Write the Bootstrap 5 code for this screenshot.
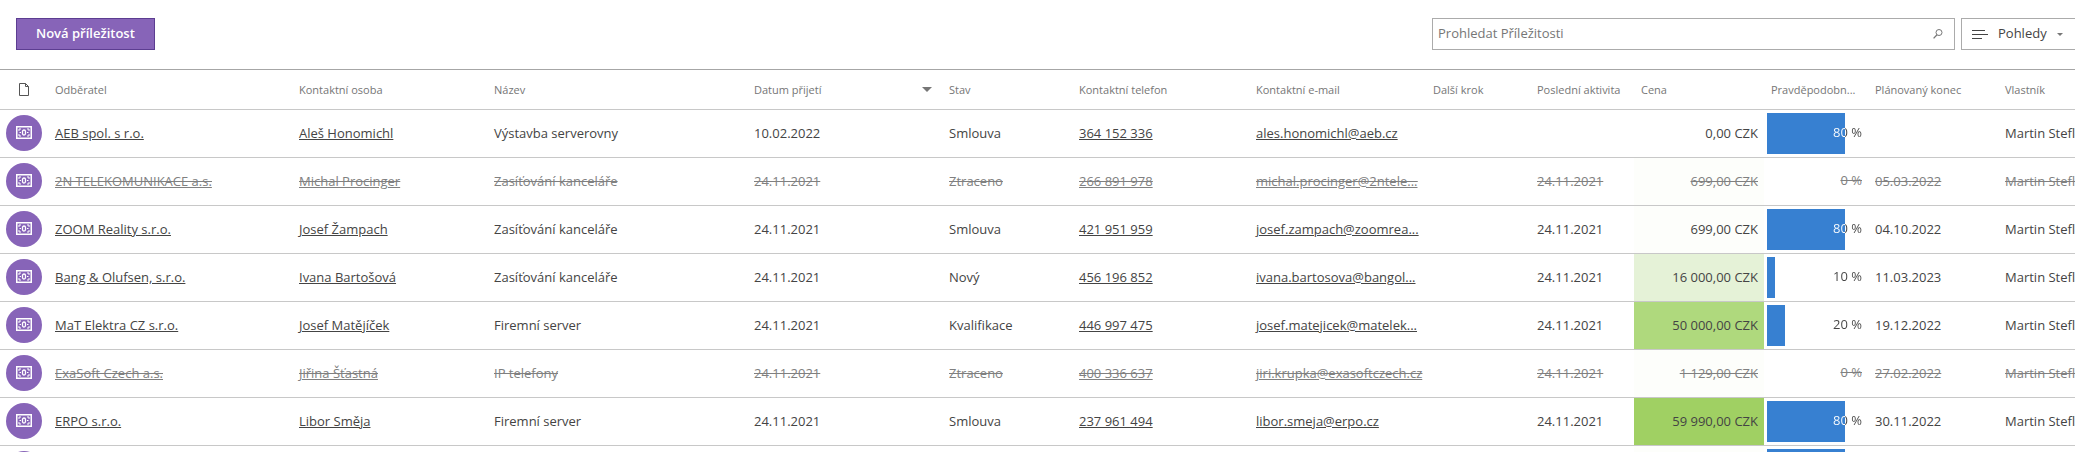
<!DOCTYPE html>
<html lang="cs">
<head>
<meta charset="utf-8">
<meta name="viewport" content="width=device-width, initial-scale=1">
<title>Příležitosti</title>
<link href="https://cdn.jsdelivr.net/npm/bootstrap@5.3.0/dist/css/bootstrap.min.css" rel="stylesheet">
<style>
  :root { --crm-purple: #8764b8; --crm-bar: #3780d1; --crm-text: #444; --crm-muted: #767676; --crm-line: #c8c8c8; --crm-frame: #ababab; }
  body { font-family: "Open Sans", "Noto Sans", sans-serif; font-size: 13px; line-height: 20px; color: var(--crm-text); }
  .toolbar { padding: 18px 0 19px 16px; gap: 6px; }
  .btn-new { --bs-btn-bg: var(--crm-purple); --bs-btn-color: #fff; --bs-btn-border-color: #5c3d91; --bs-btn-hover-bg: #7653a8; --bs-btn-hover-color: #fff;
    --bs-btn-font-size: 13px; --bs-btn-font-weight: 600; --bs-btn-padding-y: 0; --bs-btn-padding-x: 19px; height: 32px; }
  .search-box { width: 523px; height: 32px; border: 1px solid var(--crm-frame); }
  .search-box input { padding: 0 5px; font-size: 13px; color: var(--crm-text); }
  .search-box input::placeholder { color: var(--crm-muted); }
  .search-box button { width: 34px; }
  .btn-views { width: 114px; height: 32px; padding: 0 10px; gap: 10px; font-size: 13px; color: var(--crm-text); border: 1px solid var(--crm-frame); }
  .deals { table-layout: fixed; width: 100%; border-top: 1px solid #a6a6a6; }
  .deals th, .deals td { padding: 0 6px 0 7px; white-space: nowrap; overflow: hidden; border-bottom: 1px solid var(--crm-line); }
  .deals th { height: 40px; font-size: 11px; font-weight: 400; color: var(--crm-muted); }
  .deals td { height: 48px; padding-bottom: 2px; }
  .deals a { color: inherit; text-decoration: underline; }
  .deals .icon-cell { padding-left: 6px; }
  .c-icon { width: 48px } .c-client { width: 244px } .c-wide { width: 195px } .c-name { width: 260px } .c-contact { width: 177px } .c-mid { width: 130px } .c-slim { width: 104px }
  .avatar { width: 36px; height: 36px; background: var(--crm-purple); color: #fff; }
  .lost td { color: #808080; text-decoration: line-through; }
  .lost a { text-decoration: underline line-through; }
  .deals .meter-cell { padding: 0 3px; }
  .meter { height: 41px; line-height: 39px; padding-right: 3px; text-align: right; }
  .meter-on { color: transparent;
    background-image: linear-gradient(90deg, #fff var(--fill), var(--crm-text) var(--fill)), linear-gradient(90deg, var(--crm-bar) var(--fill), transparent var(--fill));
    -webkit-background-clip: text, padding-box; background-clip: text, padding-box; }
  .deals .heat-0 { background: #fdfefb } .deals .heat-1 { background: #e5f2d7 } .deals .heat-2 { background: #afd97d } .deals .heat-3 { background: #a0d063 }
</style>
</head>
<body>
<svg class="d-none" aria-hidden="true">
  <symbol id="money" viewBox="0 0 16 13">
    <g fill="none" stroke="currentColor">
      <rect x=".75" y=".75" width="14.5" height="11.5" stroke-width="1.5"/>
      <path d="M3 5V3h2M11 3h2v2M13 8v2h-2M5 10H3V8"/>
      <rect x="6.5" y="4" width="3" height="5" rx="1.5" stroke-width="1.3"/>
      <path d="M3.5 6.5H5M11 6.5h1.5"/>
    </g>
  </symbol>
</svg>
<main class="vh-100 overflow-hidden">
  <div class="toolbar d-flex align-items-center">
    <button type="button" class="btn btn-new rounded-0">Nová příležitost</button>
    <form class="search-box d-flex ms-auto" role="search">
      <input type="search" class="form-control border-0 rounded-0 shadow-none" placeholder="Prohledat Příležitosti" aria-label="Prohledat Příležitosti">
      <button type="button" class="btn border-0 p-0 d-flex align-items-center justify-content-center" aria-label="Hledat">
        <svg width="10" height="10" viewBox="0 0 10 10" fill="none" stroke="#777"><circle cx="6" cy="3.5" r="3"/><path d="M4 5.8L.6 9.4" stroke-width="1.3"/></svg>
      </button>
    </form>
    <button type="button" class="btn btn-views rounded-0 border-end-0 d-flex align-items-center">
      <svg width="16" height="9" viewBox="0 0 16 9" stroke="#444"><path d="M0 .5h13M0 4.5h16M0 8.5h10"/></svg>
      <span>Pohledy</span>
      <svg width="6" height="3" viewBox="0 0 6 3" fill="#777"><path d="M0 0h6L3 3z"/></svg>
    </button>
  </div>

  <table class="deals">
    <colgroup>
      <col class="c-icon"><col class="c-client"><col class="c-wide"><col class="c-name"><col class="c-wide"><col class="c-mid"><col class="c-contact"><col class="c-contact"><col class="c-slim"><col class="c-slim"><col class="c-mid"><col class="c-slim"><col class="c-mid"><col class="c-mid">
    </colgroup>
    <thead>
      <tr>
        <th scope="col" class="icon-cell" aria-label="Typ"><svg class="d-block mx-auto" width="10" height="13" viewBox="0 0 10 13" fill="none" stroke="#555"><path d="M.5.5h6l3 3v9h-9zM6.5.5v3h3"/></svg></th>
        <th scope="col">Odběratel</th>
        <th scope="col">Kontaktní osoba</th>
        <th scope="col">Název</th>
        <th scope="col"><div class="d-flex align-items-center justify-content-between pe-1">Datum přijetí <svg width="10" height="5" viewBox="0 0 10 5" fill="#767676"><path d="M0 0h10L5 5z"/></svg></div></th>
        <th scope="col">Stav</th>
        <th scope="col">Kontaktní telefon</th>
        <th scope="col">Kontaktní e-mail</th>
        <th scope="col">Další krok</th>
        <th scope="col">Poslední aktivita</th>
        <th scope="col">Cena</th>
        <th scope="col">Pravděpodobn...</th>
        <th scope="col">Plánovaný konec</th>
        <th scope="col">Vlastník</th>
      </tr>
    </thead>
    <tbody>
      <tr>
        <td class="icon-cell"><span class="avatar rounded-circle d-flex align-items-center justify-content-center"><svg width="16" height="13"><use href="#money"/></svg></span></td>
        <td><a href="#">AEB spol. s r.o.</a></td><td><a href="#">Aleš Honomichl</a></td><td>Výstavba serverovny</td><td>10.02.2022</td><td>Smlouva</td>
        <td><a href="#">364 152 336</a></td><td><a href="#">ales.honomichl@aeb.cz</a></td><td></td><td></td>
        <td class="text-end">0,00 CZK</td><td class="meter-cell"><div class="meter meter-on" style="--fill:80%">80 %</div></td><td></td><td>Martin Stefl</td>
      </tr>
      <tr class="lost">
        <td class="icon-cell"><span class="avatar rounded-circle d-flex align-items-center justify-content-center"><svg width="16" height="13"><use href="#money"/></svg></span></td>
        <td><a href="#">2N TELEKOMUNIKACE a.s.</a></td><td><a href="#">Michal Procinger</a></td><td>Zasíťování kanceláře</td><td>24.11.2021</td><td>Ztraceno</td>
        <td><a href="#">266 891 978</a></td><td><a href="#">michal.procinger@2ntele...</a></td><td></td><td>24.11.2021</td>
        <td class="text-end heat-0">699,00 CZK</td><td class="meter-cell"><div class="meter">0 %</div></td><td>05.03.2022</td><td>Martin Stefl</td>
      </tr>
      <tr>
        <td class="icon-cell"><span class="avatar rounded-circle d-flex align-items-center justify-content-center"><svg width="16" height="13"><use href="#money"/></svg></span></td>
        <td><a href="#">ZOOM Reality s.r.o.</a></td><td><a href="#">Josef Žampach</a></td><td>Zasíťování kanceláře</td><td>24.11.2021</td><td>Smlouva</td>
        <td><a href="#">421 951 959</a></td><td><a href="#">josef.zampach@zoomrea...</a></td><td></td><td>24.11.2021</td>
        <td class="text-end heat-0">699,00 CZK</td><td class="meter-cell"><div class="meter meter-on" style="--fill:80%">80 %</div></td><td>04.10.2022</td><td>Martin Stefl</td>
      </tr>
      <tr>
        <td class="icon-cell"><span class="avatar rounded-circle d-flex align-items-center justify-content-center"><svg width="16" height="13"><use href="#money"/></svg></span></td>
        <td><a href="#">Bang &amp; Olufsen, s.r.o.</a></td><td><a href="#">Ivana Bartošová</a></td><td>Zasíťování kanceláře</td><td>24.11.2021</td><td>Nový</td>
        <td><a href="#">456 196 852</a></td><td><a href="#">ivana.bartosova@bangol...</a></td><td></td><td>24.11.2021</td>
        <td class="text-end heat-1">16 000,00 CZK</td><td class="meter-cell"><div class="meter meter-on" style="--fill:8%">10 %</div></td><td>11.03.2023</td><td>Martin Stefl</td>
      </tr>
      <tr>
        <td class="icon-cell"><span class="avatar rounded-circle d-flex align-items-center justify-content-center"><svg width="16" height="13"><use href="#money"/></svg></span></td>
        <td><a href="#">MaT Elektra CZ s.r.o.</a></td><td><a href="#">Josef Matějíček</a></td><td>Firemní server</td><td>24.11.2021</td><td>Kvalifikace</td>
        <td><a href="#">446 997 475</a></td><td><a href="#">josef.matejicek@matelek...</a></td><td></td><td>24.11.2021</td>
        <td class="text-end heat-2">50 000,00 CZK</td><td class="meter-cell"><div class="meter meter-on" style="--fill:18%">20 %</div></td><td>19.12.2022</td><td>Martin Stefl</td>
      </tr>
      <tr class="lost">
        <td class="icon-cell"><span class="avatar rounded-circle d-flex align-items-center justify-content-center"><svg width="16" height="13"><use href="#money"/></svg></span></td>
        <td><a href="#">ExaSoft Czech a.s.</a></td><td><a href="#">Jiřina Šťastná</a></td><td>IP telefony</td><td>24.11.2021</td><td>Ztraceno</td>
        <td><a href="#">400 336 637</a></td><td><a href="#">jiri.krupka@exasoftczech.cz</a></td><td></td><td>24.11.2021</td>
        <td class="text-end heat-0">1 129,00 CZK</td><td class="meter-cell"><div class="meter">0 %</div></td><td>27.02.2022</td><td>Martin Stefl</td>
      </tr>
      <tr>
        <td class="icon-cell"><span class="avatar rounded-circle d-flex align-items-center justify-content-center"><svg width="16" height="13"><use href="#money"/></svg></span></td>
        <td><a href="#">ERPO s.r.o.</a></td><td><a href="#">Libor Směja</a></td><td>Firemní server</td><td>24.11.2021</td><td>Smlouva</td>
        <td><a href="#">237 961 494</a></td><td><a href="#">libor.smeja@erpo.cz</a></td><td></td><td>24.11.2021</td>
        <td class="text-end heat-3">59 990,00 CZK</td><td class="meter-cell"><div class="meter meter-on" style="--fill:80%">80 %</div></td><td>30.11.2022</td><td>Martin Stefl</td>
      </tr>
      <tr>
        <td class="icon-cell"><span class="avatar rounded-circle d-block"></span></td>
        <td></td><td></td><td></td><td></td><td></td><td></td><td></td><td></td><td></td>
        <td class="heat-0"></td><td class="meter-cell"><div class="meter meter-on" style="--fill:80%"></div></td><td></td><td></td>
      </tr>
    </tbody>
  </table>
</main>
<script src="https://cdn.jsdelivr.net/npm/bootstrap@5.3.0/dist/js/bootstrap.bundle.min.js"></script>
</body>
</html>
